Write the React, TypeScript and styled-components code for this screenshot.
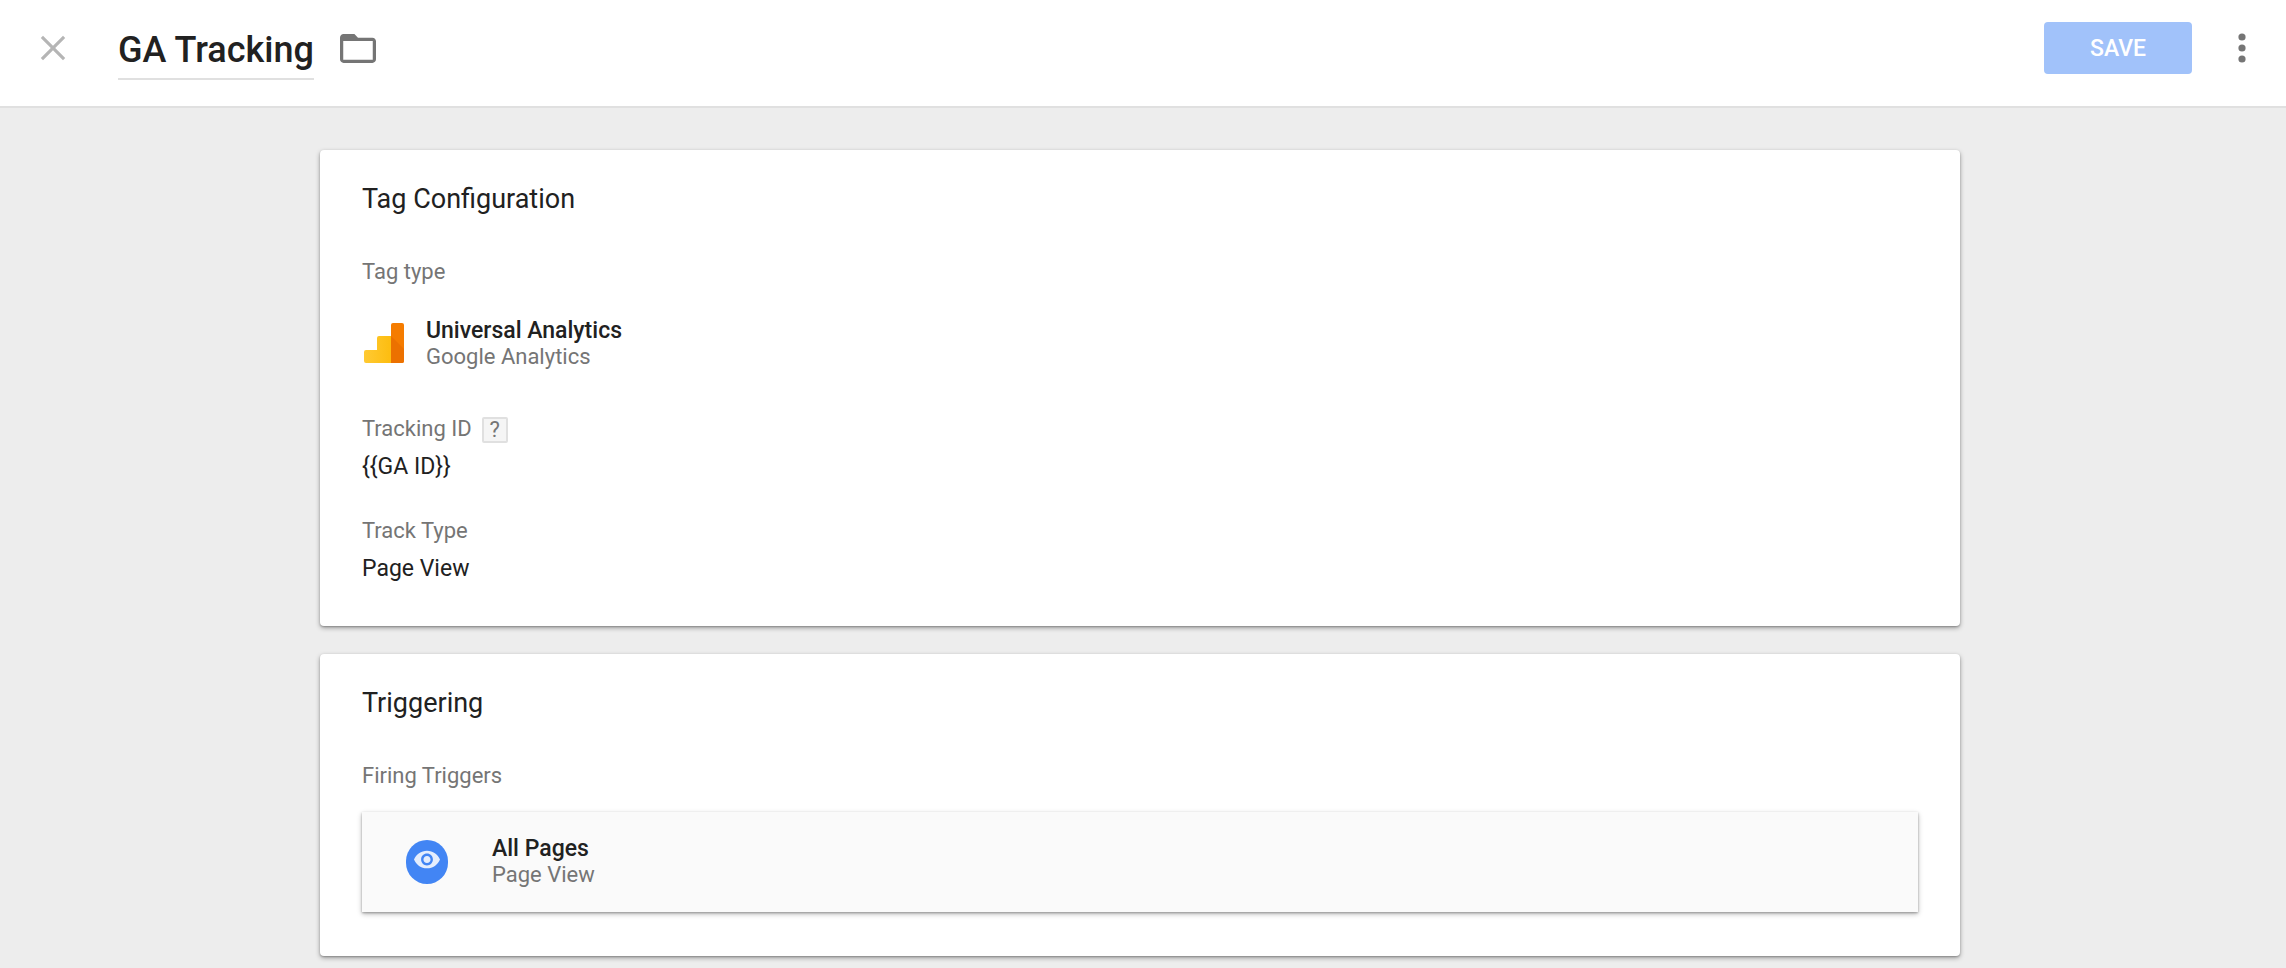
import React, { useState } from "react";
import styled, { createGlobalStyle } from "styled-components";

const GlobalStyle = createGlobalStyle`
  *, *::before, *::after { box-sizing: border-box; }
  html { background: #ededed; }
  body {
    margin: 0;
    font-family: Roboto, "Liberation Sans", sans-serif;
    color: #212121;
    -webkit-font-smoothing: antialiased;
  }
`;

const Header = styled.header`
  display: flex;
  align-items: center;
  min-height: 108px;
  padding: 0 40px 10px;
  background: #fff;
  border-bottom: 2px solid #e0e0e0;
`;

const IconButton = styled.button<{ $color: string }>`
  display: flex;
  align-items: center;
  justify-content: center;
  padding: 0;
  border: 0;
  background: none;
  color: ${(p) => p.$color};
  cursor: pointer;

  svg { display: block; fill: currentColor; }
`;

const TitleInput = styled.input`
  field-sizing: content;
  margin: 0 26px 0 52px;
  padding: 10px 0 4px;
  height: 64px;
  border: 0;
  border-bottom: 2px solid #e0e0e0;
  outline: 0;
  background: none;
  color: inherit;
  font: 500 36px/48px Roboto, "Liberation Sans", sans-serif;
`;

const HeaderActions = styled.div`
  display: flex;
  align-items: center;
  gap: 46px;
  margin-left: auto;
`;

const SaveButton = styled.button`
  width: 148px;
  height: 52px;
  padding: 2px 0 0;
  border: 0;
  border-radius: 4px;
  background: #a1c2fa;
  color: #fff;
  font: 500 23px/50px Roboto, "Liberation Sans", sans-serif;
`;

const Main = styled.main`
  display: flex;
  flex-direction: column;
  gap: 28px;
  max-width: 1640px;
  margin: 0 auto;
  padding: 42px 0 12px;
`;

const PageBody = styled.div`
  padding-right: 6px;
`;

const Card = styled.section`
  padding: 29px 42px 41px;
  border-radius: 4px;
  background: #fff;
  box-shadow: 0 2px 5px rgba(0, 0, 0, 0.32), 0 1px 2px rgba(0, 0, 0, 0.24);
`;

const CardTitle = styled.h2`
  margin: 0 0 39px;
  font-size: 27px;
  font-weight: 400;
  line-height: 40px;
`;

const Label = styled.div`
  display: flex;
  align-items: flex-end;
  gap: 10px;
  color: #757575;
  font-size: 22px;
  line-height: 28px;
`;

const Value = styled.div`
  margin-top: 8px;
  font-size: 23px;
  line-height: 32px;
`;

const Field = styled.div`
  margin-top: 34px;
`;

const HelpButton = styled.button`
  width: 26px;
  height: 26px;
  padding: 0;
  border: 2px solid #e0e0e0;
  border-radius: 2px;
  background: #f5f5f5;
  color: #757575;
  font: 400 22px/22px Roboto, "Liberation Sans", sans-serif;
  cursor: pointer;
`;

const TagType = styled.div`
  display: flex;
  align-items: center;
  gap: 20px;
  margin: 32px 0 45px;

  svg { display: block; }
`;

const Name = styled.div`
  font-size: 23px;
  font-weight: 500;
  line-height: 26px;
`;

const Description = styled.div`
  color: #757575;
  font-size: 22px;
  line-height: 26px;
`;

const TriggerRow = styled.a`
  display: flex;
  align-items: center;
  gap: 44px;
  min-height: 100px;
  margin: 22px 0 3px;
  padding: 0 44px;
  background: #fafafa;
  color: inherit;
  text-decoration: none;
  box-shadow: 0 2px 5px rgba(0, 0, 0, 0.28), 0 1px 2px rgba(0, 0, 0, 0.26);
`;

const TriggerBadge = styled.span`
  display: flex;
  justify-content: center;
  width: 42px;
  height: 44px;
  padding-top: 10px;
  border-radius: 21px;
  background: #4285f4;
`;

function AnalyticsLogo() {
  return (
    <svg width="44" height="44" viewBox="0 1 44 44" aria-hidden="true">
      <defs>
        <linearGradient id="gold" x1="0" x2="1">
          <stop offset="0" stopColor="#ffca33" />
          <stop offset="1" stopColor="#fdbd10" />
        </linearGradient>
      </defs>
      <path
        d="M29 42H4a2 2 0 0 1-2-2V31a2 2 0 0 1 2-2h11V17a2 2 0 0 1 2-2h12z"
        fill="url(#gold)"
      />
      <path d="M31 2h9a2 2 0 0 1 2 2v36a2 2 0 0 1-2 2H29V4a2 2 0 0 1 2-2z" fill="#f57c00" />
      <path d="M29 15l13 13v12a2 2 0 0 1-2 2H29z" fill="#ec7100" />
    </svg>
  );
}

export default function App() {
  const [title, setTitle] = useState("GA Tracking");
  return (
    <>
      <GlobalStyle />
      <Header>
        <IconButton $color="#b5b5b5" aria-label="Close">
          <svg width="26" height="26" viewBox="0 0 26 26">
            <path d="M3 .8 13 10.8 23 .8 25.2 3 15.2 13l10 10-2.2 2.2-10-10-10 10L.8 23l10-10L.8 3z" />
          </svg>
        </IconButton>
        <TitleInput
          aria-label="Tag name"
          value={title}
          onChange={(e) => setTitle(e.target.value)}
        />
        <IconButton $color="#757575" aria-label="Move to folder">
          <svg width="36" height="29" viewBox="2 4 20 16">
            <path d="M20 6h-8l-2-2H4c-1.1 0-2 .9-2 2v12c0 1.1.9 2 2 2h16c1.1 0 2-.9 2-2V8c0-1.1-.9-2-2-2zm.2 12.2H3.8V7.9h16.4z" />
          </svg>
        </IconButton>
        <HeaderActions>
          <SaveButton>SAVE</SaveButton>
          <IconButton $color="#757575" aria-label="More actions">
            <svg width="8" height="30" viewBox="0 0 8 30">
              <circle cx="4" cy="4" r="3.6" />
              <circle cx="4" cy="15" r="3.6" />
              <circle cx="4" cy="26" r="3.6" />
            </svg>
          </IconButton>
        </HeaderActions>
      </Header>

      <PageBody>
        <Main>
          <Card>
            <CardTitle>Tag Configuration</CardTitle>
            <Label>Tag type</Label>
            <TagType>
              <AnalyticsLogo />
              <div>
                <Name>Universal Analytics</Name>
                <Description>Google Analytics</Description>
              </div>
            </TagType>
            <Label>
              Tracking ID
              <HelpButton aria-label="Help: Tracking ID">?</HelpButton>
            </Label>
            <Value>{"{{GA ID}}"}</Value>
            <Field>
              <Label>Track Type</Label>
              <Value>Page View</Value>
            </Field>
          </Card>

          <Card>
            <CardTitle>Triggering</CardTitle>
            <Label>Firing Triggers</Label>
            <TriggerRow href="#all-pages">
              <TriggerBadge>
                <svg width="26" height="19" viewBox="1 4.5 22 15" aria-hidden="true">
                  <path
                    fill="#e4edfd"
                    d="M12 4.5C7 4.5 2.73 7.61 1 12c1.73 4.39 6 7.5 11 7.5s9.27-3.11 11-7.5c-1.73-4.39-6-7.5-11-7.5zM12 17c-2.76 0-5-2.24-5-5s2.24-5 5-5 5 2.24 5 5-2.24 5-5 5zm0-8c-1.66 0-3 1.34-3 3s1.34 3 3 3 3-1.34 3-3-1.34-3-3-3z"
                  />
                </svg>
              </TriggerBadge>
              <div>
                <Name>All Pages</Name>
                <Description>Page View</Description>
              </div>
            </TriggerRow>
          </Card>
        </Main>
      </PageBody>
    </>
  );
}
